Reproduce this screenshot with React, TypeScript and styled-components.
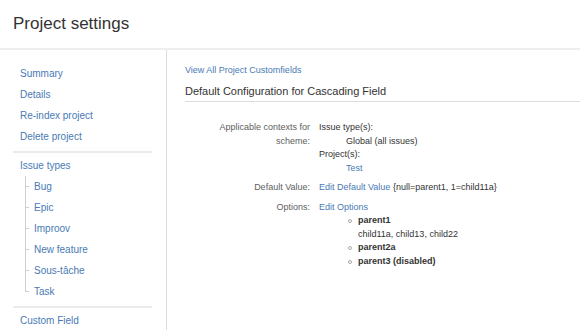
import * as React from 'react';
import styled, { createGlobalStyle } from 'styled-components';

const GlobalStyle = createGlobalStyle`
  body {
    margin: 0;
    background: #fff;
    font-family: "Liberation Sans", Arial, sans-serif;
    color: #333;
  }
`;

const Page = styled.div`
  width: 580px;
  height: 330px;
  overflow: hidden;
  display: flex;
  flex-direction: column;
`;

const Header = styled.header`
  height: 48px;
  flex: none;
  display: flex;
  align-items: center;
  padding-left: 13px;
  border-bottom: 2px solid #eeeeee;
  h1 {
    margin: 0;
    font-size: 17px;
    font-weight: normal;
    color: #333;
  }
`;

const Body = styled.div`
  flex: 1;
  display: flex;
`;

const Sidebar = styled.nav`
  width: 139px;
  flex: none;
  padding: 13px 14px 0 13px;
  border-right: 1px solid #dddddd;
`;

const NavLink = styled.a<{ $sub?: boolean; $last?: boolean }>`
  display: block;
  position: relative;
  height: 21px;
  line-height: 21px;
  font-size: 10px;
  color: #4a7ab5;
  text-decoration: none;
  padding-left: ${(p) => (p.$sub ? '21px' : '7px')};
  ${(p) =>
    p.$sub &&
    `
    &::before {
      content: '';
      position: absolute;
      left: 12px;
      top: 0;
      height: ${p.$last ? '11px' : '21px'};
      border-left: 1px solid #cfcfcf;
    }
    &::after {
      content: '';
      position: absolute;
      left: 12px;
      top: 10px;
      width: 4px;
      border-top: 1px solid #cfcfcf;
    }
  `}
`;

const Divider = styled.hr`
  border: none;
  border-top: 2px solid #ebebeb;
  margin: 4px 0 2px;
`;

const Main = styled.main`
  flex: 1;
  padding: 14px 0 0 18px;
`;

const TopLink = styled.a`
  display: block;
  font-size: 9px;
  line-height: 13px;
  color: #4a7ab5;
  text-decoration: none;
`;

const Title = styled.h2`
  margin: 7px 0 0;
  font-size: 11px;
  line-height: 15px;
  font-weight: normal;
  color: #333;
  padding-bottom: 2px;
  border-bottom: 1px solid #dddddd;
`;

const Fields = styled.div`
  margin-top: 16px;
  font-size: 9px;
  line-height: 13.5px;
`;

const FieldRow = styled.div`
  display: grid;
  grid-template-columns: 125px 1fr;
  column-gap: 9px;
  padding: 3px 0;
`;

const Label = styled.div`
  text-align: right;
  color: #5e5e5e;
`;

const Value = styled.div`
  color: #333;
`;

const Indent = styled.div`
  padding-left: 27px;
`;

const Link = styled.a`
  color: #4a7ab5;
  text-decoration: none;
`;

const OptionList = styled.ul`
  list-style: none;
  margin: 0;
  padding: 0 0 0 39px;
`;

const Option = styled.li`
  position: relative;
  b {
    font-weight: bold;
    color: #333;
  }
  &::before {
    content: '';
    position: absolute;
    left: -10px;
    top: 5px;
    width: 2px;
    height: 2px;
    border: 1px solid #aaa;
    border-radius: 50%;
  }
`;

const issueTypes = ['Bug', 'Epic', 'Improov', 'New feature', 'Sous-tâche', 'Task'];

export default function App() {
  return (
    <Page>
      <GlobalStyle />
      <Header>
        <h1>Project settings</h1>
      </Header>
      <Body>
        <Sidebar>
          <NavLink href="#">Summary</NavLink>
          <NavLink href="#">Details</NavLink>
          <NavLink href="#">Re-index project</NavLink>
          <NavLink href="#">Delete project</NavLink>
          <Divider />
          <NavLink href="#">Issue types</NavLink>
          {issueTypes.map((t, i) => (
            <NavLink key={t} href="#" $sub $last={i === issueTypes.length - 1}>
              {t}
            </NavLink>
          ))}
          <Divider />
          <NavLink href="#">Custom Field</NavLink>
        </Sidebar>
        <Main>
          <TopLink href="#">View All Project Customfields</TopLink>
          <Title>Default Configuration for Cascading Field</Title>
          <Fields>
            <FieldRow>
              <Label>
                Applicable contexts for
                <br />
                scheme:
              </Label>
              <Value>
                Issue type(s):
                <Indent>Global (all issues)</Indent>
                Project(s):
                <Indent>
                  <Link href="#">Test</Link>
                </Indent>
              </Value>
            </FieldRow>
            <FieldRow>
              <Label>Default Value:</Label>
              <Value>
                <Link href="#">Edit Default Value</Link> {'{null=parent1, 1=child11a}'}
              </Value>
            </FieldRow>
            <FieldRow>
              <Label>Options:</Label>
              <Value>
                <Link href="#">Edit Options</Link>
                <OptionList>
                  <Option>
                    <b>parent1</b>
                    <br />
                    child11a, child13, child22
                  </Option>
                  <Option>
                    <b>parent2a</b>
                  </Option>
                  <Option>
                    <b>parent3 (disabled)</b>
                  </Option>
                </OptionList>
              </Value>
            </FieldRow>
          </Fields>
        </Main>
      </Body>
    </Page>
  );
}
